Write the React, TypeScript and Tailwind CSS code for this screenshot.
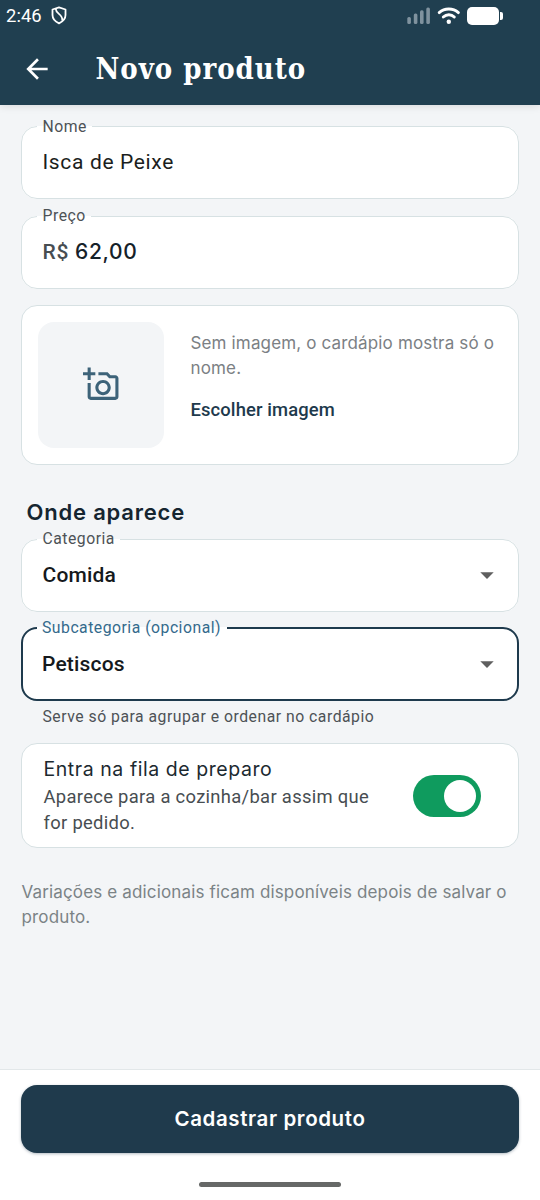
import type { ReactNode } from "react";
import { MdArrowBack, MdArrowDropDown, MdOutlineAddAPhoto } from "react-icons/md";

const roboto = "font-['Roboto',sans-serif]";
const sans = "font-['Inter',sans-serif]";

function StatusBar() {
  return (
    <div className="flex h-[31px] items-center justify-between pl-[6px] pr-[37.500px]">
      <div className="flex items-center gap-[9px]">
        <span className="text-[18.4px] leading-[20px] tracking-[0.05px]">2:46</span>
        <svg width="16" height="19" viewBox="0 0 16 19" fill="none" stroke="currentColor" strokeWidth="1.8">
          <path d="M8 1.4 14.5 3.5v5.6c0 3.8-2.8 6.6-6.5 8.2C4.300 15.700 1.500 12.900 1.500 9.100V3.500Z" strokeLinejoin="round" />
          <path d="M4.800 3C5 8.500 11.800 7.500 11.300 14.500" />
        </svg>
      </div>
      <div className="flex items-center">
        <svg width="24" height="18" viewBox="0 0 24 18" fill="#7f929e">
          <rect x="0.300" y="10" width="3.600" height="7" rx="1.500" />
          <rect x="6.800" y="6.500" width="3.600" height="10.500" rx="1.500" />
          <rect x="13" y="3.300" width="3.600" height="13.700" rx="1.500" />
          <rect x="19.300" y="0.500" width="3.600" height="16.500" rx="1.500" />
        </svg>
        <svg className="ml-[6px]" width="24" height="18" viewBox="0 0 24 18" fill="none" stroke="currentColor" strokeWidth="2.900" strokeLinecap="round">
          <path d="M2.200 5.600C7.500 0.800 16.100 0.800 21.400 5.600" />
          <path d="M6.300 10C9.600 6.900 14.200 6.900 17.300 10" />
          <circle cx="11.800" cy="14.700" r="2.200" fill="currentColor" stroke="none" />
        </svg>
        <div className="ml-[6px] h-[18px] w-[32px] rounded-[5px] bg-white" />
        <div className="ml-[1px] h-[8px] w-[2.500px] rounded-r-[2px] bg-white" />
      </div>
    </div>
  );
}

function Field({ label, focused, children }: { label: string; focused?: boolean; children: ReactNode }) {
  return (
    <fieldset
      className={
        focused
          ? "h-[83px] rounded-[16px] border-[2.5px] border-[#1e3a4d] bg-white pl-[13.500px] pr-[19px]"
          : "h-[82.5px] rounded-[16px] border border-[#d7e1e3] bg-white pl-[15px] pr-[20px]"
      }
    >
      <legend
        className={
          focused
            ? "h-[20px] px-[5.500px] text-[15.750px] leading-[20px] tracking-[0.500px] text-[#346a8c]"
            : "h-[20px] px-[5.500px] text-[15.750px] leading-[20px] tracking-[0.500px] text-[#4d5256]"
        }
      >
        {label}
      </legend>
      <div className="flex h-[51px] items-center justify-between pl-[5.500px]">{children}</div>
    </fieldset>
  );
}

function Select({ value }: { value: string }) {
  return (
    <>
      <span className="text-[21px] font-medium leading-[28px] tracking-[0.170px] text-[#15191c]">{value}</span>
      <MdArrowDropDown className="mr-[-5px] size-[32px] text-[#5f5f5f]" />
    </>
  );
}

export default function App() {
  return (
    <div className={`${roboto} flex h-[1200px] w-[540px] flex-col overflow-hidden bg-[#f3f5f7]`}>
      <header className="h-[105px] shrink-0 bg-[#203f50] text-white shadow-[0_1px_8px_rgba(0,0,0,0.12)]">
        <StatusBar />
        <div className="flex h-[75px] items-center pl-[21px]">
          <MdArrowBack className="size-[32px]" />
          <h1 className="ml-[42.500px] whitespace-nowrap font-['DejaVu_Serif_Condensed','DejaVu_Serif',serif] text-[29px] font-bold leading-[40px] tracking-[0.980px] [font-stretch:condensed]">
            Novo produto
          </h1>
        </div>
      </header>

      <main className="flex flex-1 flex-col px-[21px] pt-[11.500px]">
        <div className="flex flex-col gap-[7px]">
          <Field label="Nome">
            <span className="text-[21px] leading-[28px] tracking-[0.650px] text-[#1b1e20]">Isca de Peixe</span>
          </Field>
          <Field label="Preço">
            <span className={`${sans} text-[21px] font-medium leading-[28px] tracking-[0.700px] text-[#152129]`}>
              <span className="font-['Roboto',sans-serif] text-[21px] text-[#474d51]">R$ </span>62,00
            </span>
          </Field>
        </div>

        <section className="mt-[16px] flex h-[160px] items-center rounded-[16px] border border-[#d7e1e3] bg-white pl-[16px] pr-[20px]">
          <div className="flex size-[126px] shrink-0 items-center justify-center rounded-[16px] bg-[#f3f5f7]">
            <MdOutlineAddAPhoto className="size-[37px] text-[#3d6379]" />
          </div>
          <div className="ml-[26.500px] flex flex-col pb-[15.500px]">
            <p className={`${sans} whitespace-nowrap text-[17px] leading-[25px] tracking-[0.150px] text-[#7b8084]`}>
              Sem imagem, o cardápio mostra só o<br />nome.
            </p>
            <button className="mt-[16px] self-start text-[18.400px] font-medium leading-[26px] tracking-[0.110px] text-[#1e3a4d]">
              Escolher imagem
            </button>
          </div>
        </section>

        <h2 className={`${sans} mt-[33.500px] h-[31px] pl-[5.500px] text-[22px] font-semibold leading-[28px] tracking-[0.800px] text-[#152530]`}>
          Onde aparece
        </h2>
        <div className="flex flex-col gap-[6.500px]">
          <Field label="Categoria">
            <Select value="Comida" />
          </Field>
          <Field label="Subcategoria (opcional)" focused>
            <Select value="Petiscos" />
          </Field>
        </div>
        <p className="mt-[6px] pl-[21.500px] text-[15.750px] leading-[20px] tracking-[0.510px] text-[#4d5256]">
          Serve só para agrupar e ordenar no cardápio
        </p>

        <section className="mt-[16px] flex h-[105px] items-center justify-between rounded-[16px] border border-[#d7e1e3] bg-white pl-[21.500px] pr-[37px]">
          <div className="pt-[1px]">
            <h3 className={`${sans} text-[19.500px] leading-[27px] tracking-[0.560px] text-[#1c2930]`}>Entra na fila de preparo</h3>
            <p className="whitespace-nowrap pt-[1px] text-[18.400px] leading-[26px] tracking-[0.310px] text-[#474d51]">
              Aparece para a cozinha/bar assim que<br />for pedido.
            </p>
          </div>
          <button role="switch" aria-checked="true" className="flex h-[42px] w-[68px] items-center justify-end rounded-full bg-[#0f9b5e] pr-[5px]">
            <span className="size-[32px] rounded-full bg-white" />
          </button>
        </section>

        <p className={`${sans} mt-[32px] whitespace-nowrap pl-[0.500px] text-[17px] leading-[25px] tracking-[0.150px] text-[#7b8386]`}>
          Variações e adicionais ficam disponíveis depois de salvar o<br />produto.
        </p>
      </main>

      <footer className="flex h-[131px] shrink-0 flex-col items-center border-t border-[#e2e7e9] bg-white px-[21px] pt-[14.500px]">
        <button className={`${sans} h-[68.500px] w-full rounded-[16px] bg-[#1f3a4c] pt-[1px] text-[20.500px] font-semibold tracking-[0.600px] text-white shadow-[0_1px_3px_rgba(31,58,76,0.35)]`}>
          Cadastrar produto
        </button>
        <div className="mt-[28.500px] h-[5px] w-[142px] rounded-full bg-[#666867]" />
      </footer>
    </div>
  );
}
